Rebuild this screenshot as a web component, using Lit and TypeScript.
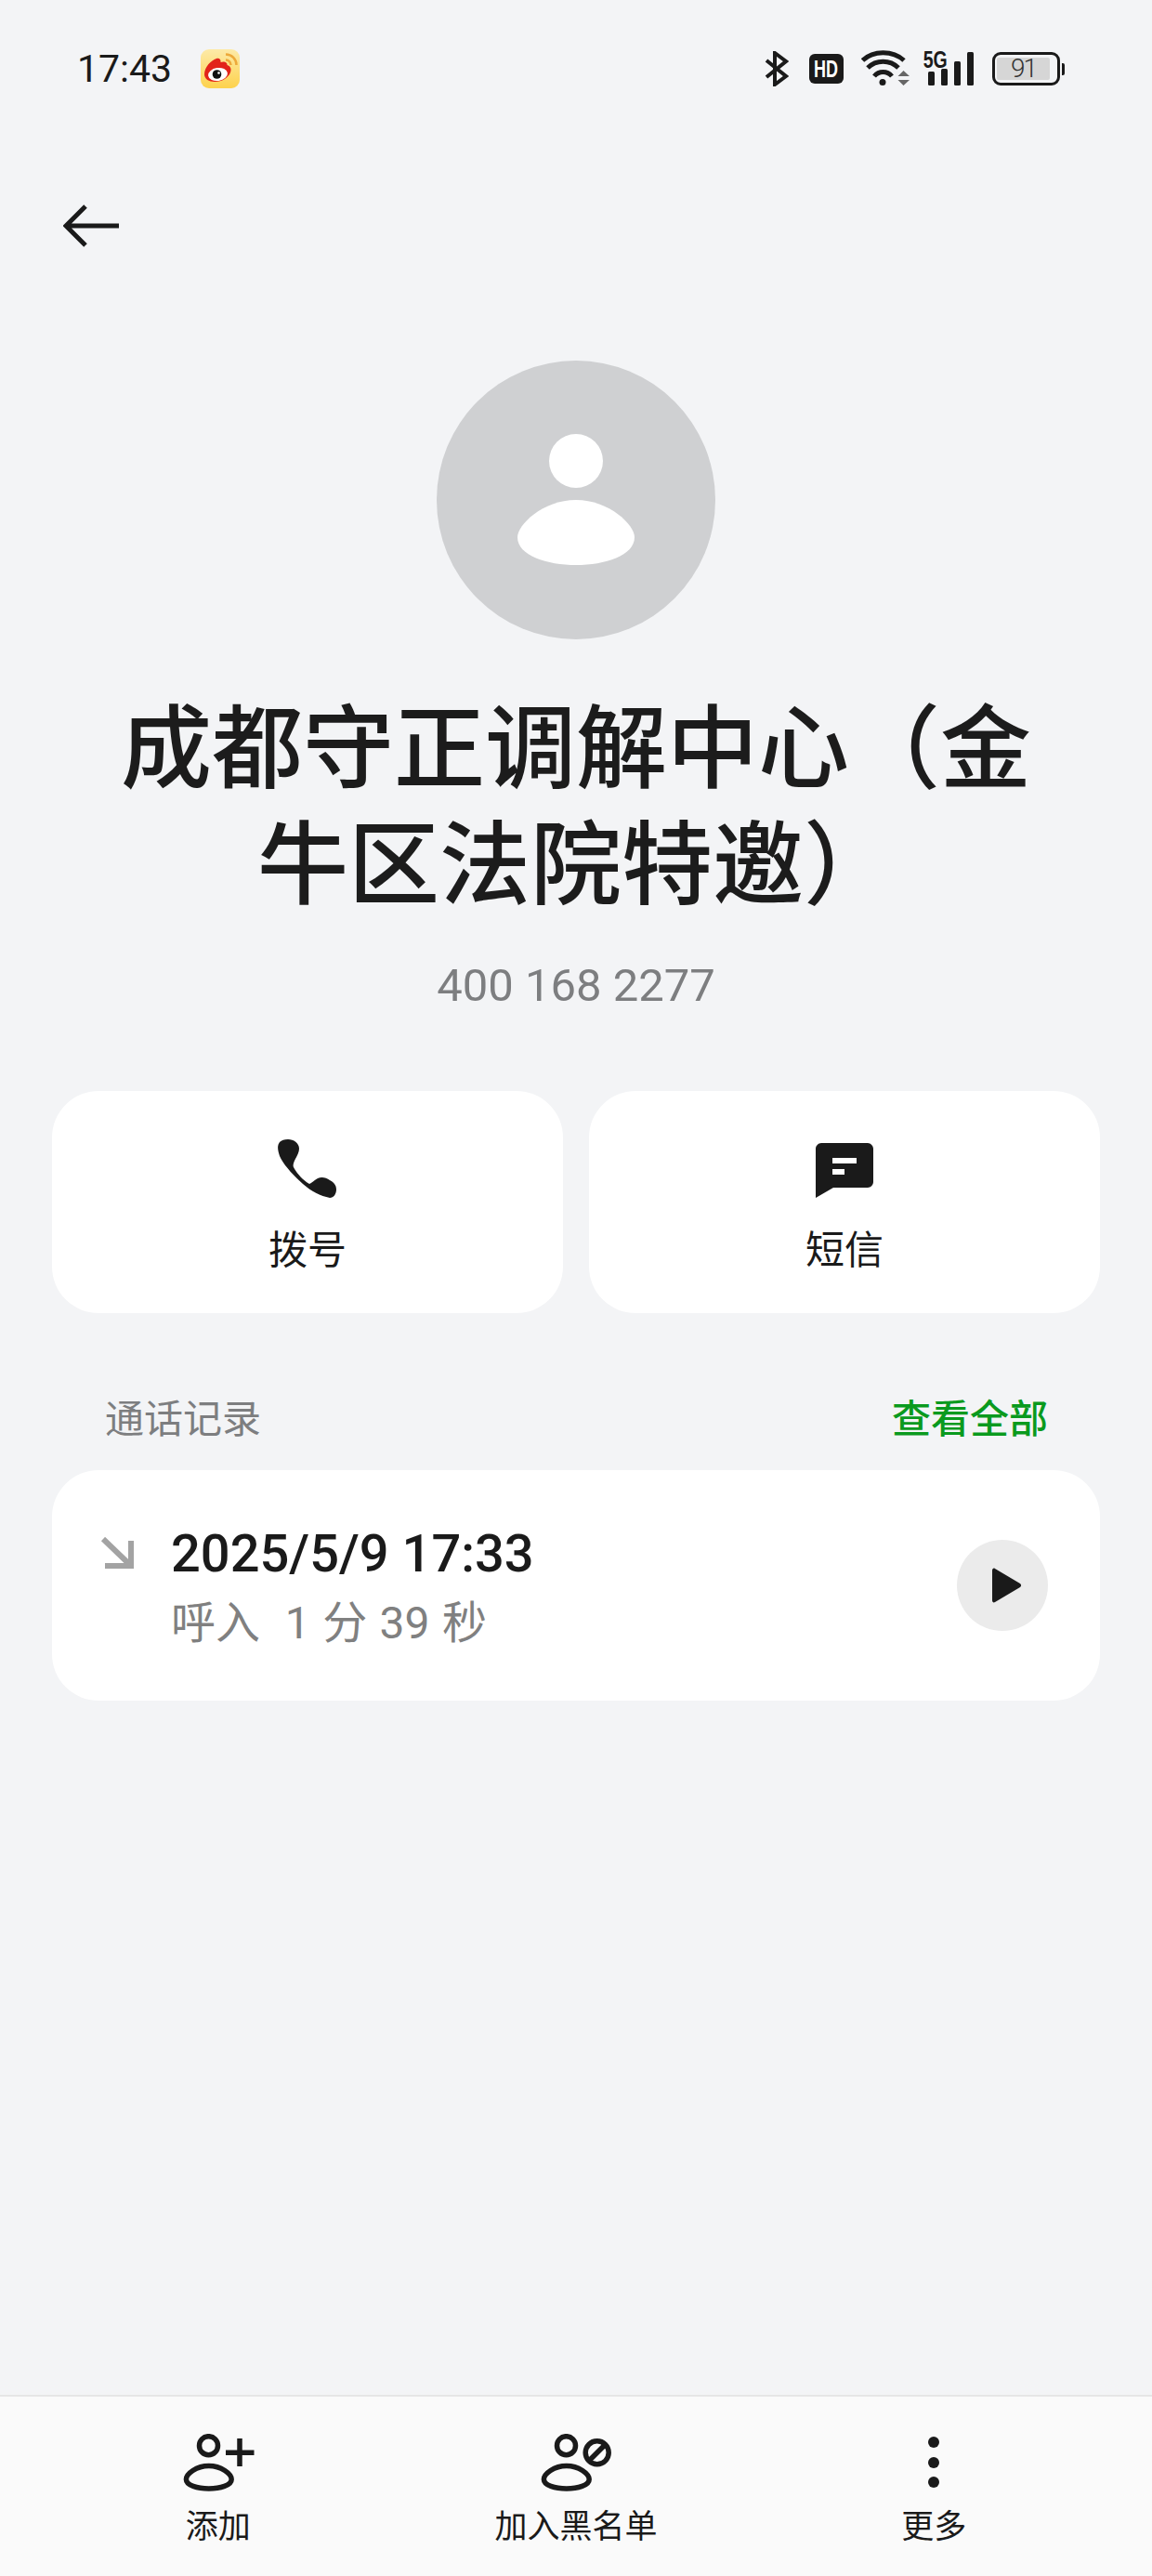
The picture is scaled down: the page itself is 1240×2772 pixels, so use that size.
import { html, css, LitElement } from "lit";
import { customElement } from "lit/decorators.js";

@customElement("app-root")
export class AppRoot extends LitElement {
  static styles = css`
    :host {
      display: flex;
      flex-direction: column;
      height: 2772px;
      background: #f3f4f6;
      color: #1a1a1a;
      font-family: Roboto, "Noto Sans CJK SC", sans-serif;
    }
    svg {
      display: block;
      flex: none;
    }

    .status {
      display: flex;
      align-items: center;
      height: 42px;
      margin-top: 53px;
      padding: 0 94px 0 83px;
    }
    .time {
      font-size: 41px;
      width: 133px;
    }
    .status-right {
      margin-left: auto;
      display: flex;
      align-items: center;
    }
    .hd-badge {
      width: 37px;
      height: 32px;
      margin-left: 22px;
      border-radius: 6px;
      background: #1a1a1a;
      color: #fff;
      font: 700 25px/32px "Liberation Sans", sans-serif;
      text-align: center;
    }
    .hd-badge span {
      display: inline-block;
      transform: scaleX(0.72);
    }
    .wifi {
      margin-left: 19px;
    }
    .signal {
      position: relative;
      margin-left: 20px;
    }
    .five-g {
      position: absolute;
      left: -9px;
      top: -4px;
      font: 700 25px/24px "Liberation Sans", sans-serif;
      transform: scaleX(0.78);
    }
    .battery {
      display: flex;
      align-items: center;
      margin-left: 20px;
    }
    .battery-body {
      width: 73px;
      height: 36px;
      box-sizing: border-box;
      border: 3px solid #1a1a1a;
      border-radius: 9px;
      padding: 3px 2px;
    }
    .battery-fill {
      width: 57px;
      height: 24px;
      background: #d6d6d6;
      border-radius: 2px;
      font-size: 28px;
      font-weight: 300;
      letter-spacing: -2px;
      line-height: 24px;
      text-align: center;
      color: #333;
    }
    .battery-tip {
      width: 3px;
      height: 13px;
      margin-left: 2px;
      background: #1a1a1a;
      border-radius: 0 2px 2px 0;
    }

    .back {
      margin: 125px 0 0 68px;
    }
    .avatar {
      width: 300px;
      height: 300px;
      margin: 122px auto 0;
      border-radius: 50%;
      background: #cfd0d2;
      display: flex;
      align-items: center;
      justify-content: center;
    }
    .name {
      margin: 56px 110px 0;
      font-size: 98px;
      line-height: 125px;
      font-weight: 500;
      text-align: center;
      color: #1c1c1c;
    }
    .number {
      margin-top: 37px;
      font-size: 49px;
      line-height: 60px;
      text-align: center;
      color: #7d7e80;
    }

    .actions {
      display: grid;
      grid-template-columns: 1fr 1fr;
      gap: 28px;
      margin: 83px 56px 0;
    }
    .action {
      height: 239px;
      background: #fff;
      border-radius: 50px;
      display: flex;
      flex-direction: column;
      align-items: center;
      padding-top: 52px;
      box-sizing: border-box;
      font-size: 42px;
    }
    .action-icon {
      height: 64px;
    }
    .action-label {
      margin-top: 28px;
      line-height: 56px;
    }

    .section {
      display: flex;
      justify-content: space-between;
      margin: 86px 56px 0;
      padding: 0 56px 0 57px;
      font-size: 42px;
      line-height: 58px;
      color: #7d7e80;
    }
    .see-all {
      color: #0a9a1e;
      font-weight: 500;
    }

    .log {
      display: flex;
      align-items: center;
      height: 248px;
      box-sizing: border-box;
      margin: 25px 56px 0;
      padding: 0 56px 0 52px;
      background: #fff;
      border-radius: 50px;
    }
    .log-arrow {
      align-self: flex-start;
      margin-top: 72px;
    }
    .log-text {
      flex: 1;
      margin-left: 40px;
      padding-top: 7px;
    }
    .log-date {
      font-size: 56px;
      line-height: 66px;
      font-weight: 500;
    }
    .log-sub {
      margin-top: 9px;
      font-size: 48px;
      line-height: 66px;
      color: #808080;
      word-spacing: 1.500px;
    }
    .play {
      width: 98px;
      height: 98px;
      border-radius: 50%;
      background: #ebebeb;
      display: flex;
      align-items: center;
      justify-content: center;
    }
    .play svg {
      margin-left: 9px;
    }

    .spacer {
      flex: 1;
    }

    .bottom {
      display: grid;
      grid-template-columns: repeat(3, 1fr);
      height: 195px;
      box-sizing: border-box;
      padding: 40px 42px 0;
      background: #fafafa;
      border-top: 2px solid #e6e6e6;
    }
    .tab {
      display: flex;
      flex-direction: column;
      align-items: center;
      font-size: 35px;
    }
    .tab-label {
      margin-top: 12px;
      line-height: 50px;
    }
  `;

  render() {
    return html`
      <div class="status">
        <div class="time">17:43</div>
        ${this.weiboIcon()}
        <div class="status-right">
          <svg width="26" height="38" viewBox="0 0 26 38" fill="none" stroke="#1a1a1a" stroke-width="4">
            <path d="M2 10 L23 27 L11 36 V2 L23 11 L2 28" />
          </svg>
          <div class="hd-badge"><span>HD</span></div>
          <svg class="wifi" width="52" height="40" viewBox="0 0 52 40" fill="none" stroke="#1a1a1a" stroke-width="5">
            <path d="M1.500 11 C13 0 34 0 46 11" />
            <path d="M7 19 C16 10 31 10 40 19" />
            <path d="M14 28 C19 22 28 22 33 28" />
            <circle cx="23" cy="34.500" r="3.500" fill="#1a1a1a" stroke="none" />
            <path d="M39.500 28 L45.500 22 L52 28 Z M39.500 32 H52 L45.500 38 Z" fill="#666" stroke="none" />
          </svg>
          <div class="signal">
            <svg width="49" height="36" viewBox="0 0 49 36" fill="#1a1a1a">
              <rect x="0" y="21" width="7" height="15" rx="1.500" />
              <rect x="14" y="18" width="7" height="18" rx="1.500" />
              <rect x="28" y="10" width="7" height="26" rx="1.500" />
              <rect x="42" y="0" width="7" height="36" rx="1.500" />
            </svg>
            <span class="five-g">5G</span>
          </div>
          <div class="battery">
            <div class="battery-body"><div class="battery-fill">91</div></div>
            <div class="battery-tip"></div>
          </div>
        </div>
      </div>

      <svg class="back" width="62" height="46" viewBox="0 0 62 46" fill="none" stroke="#1a1a1a" stroke-width="5">
        <path d="M60 23 H3 M24 2 L3 23 L24 44" />
      </svg>

      <div class="avatar">
        <svg width="128" height="142" viewBox="0 0 128 142" fill="#fff">
          <circle cx="64" cy="29" r="29" />
          <path d="M64 71 C100 71 127 98 127 111 C127 131 95 141 64 141 C33 141 1 131 1 111 C1 98 28 71 64 71 Z" />
        </svg>
      </div>

      <div class="name">成都守正调解中心（金牛区法院特邀）</div>
      <div class="number">400 168 2277</div>

      <div class="actions">
        <div class="action">
          <svg class="action-icon" width="64" height="64" viewBox="0 0 64 64" fill="#1a1a1a">
            <path d="M11 0 C17 0 23 4 23 10 C23 14 21 17 19 21 C17 25 16 28 17 30 C20 36 27 44 34 48 C37 47 39 44 43 42 C47 40 52 41 56 44 C60 46 63 49 63 54 C63 59 60 63 56 63 C46 61 36 56 27 48 C15 37 6 27 2 18 C0 12 -1 7 2 3 C4 1 7 0 11 0 Z" />
          </svg>
          <div class="action-label">拨号</div>
        </div>
        <div class="action">
          <svg class="action-icon" width="62" height="64" viewBox="0 0 62 64" fill="#1a1a1a">
            <path d="M6 4 H56 C59 4 62 7 62 10 V46 C62 49 59 52 56 52 H19 L0 63 V10 C0 7 3 4 6 4 Z" />
            <rect x="18" y="20" width="26" height="6" fill="#fff" />
            <rect x="18" y="32" width="13" height="6" fill="#fff" />
          </svg>
          <div class="action-label">短信</div>
        </div>
      </div>

      <div class="section">
        <span>通话记录</span>
        <span class="see-all">查看全部</span>
      </div>

      <div class="log">
        <svg class="log-arrow" width="36" height="34" viewBox="0 0 36 34" fill="none" stroke="#a3a3a3" stroke-width="6">
          <path d="M3 2 L31 29 M33 4 V31 H5" />
        </svg>
        <div class="log-text">
          <div class="log-date">2025/5/9 17:33</div>
          <div class="log-sub">呼入 &nbsp;1 分 39 秒</div>
        </div>
        <div class="play">
          <svg width="32" height="38" viewBox="0 0 32 38" fill="#1a1a1a">
            <path d="M3 1 L30 17 C31.500 18 31.500 20 30 21 L3 37 C1.500 38 0 37 0 35 V3 C0 1 1.500 0 3 1 Z" />
          </svg>
        </div>
      </div>

      <div class="spacer"></div>

      <div class="bottom">
        <div class="tab">
          <svg width="78" height="64" viewBox="0 0 78 64" fill="none" stroke="#1a1a1a" stroke-width="5.500">
            <circle cx="28.500" cy="12.700" r="10" />
            <path d="M28.800 34.500 C42 34.500 53.200 43 53.200 49 C53.200 55.500 41 59 28.800 59 C16.500 59 4.400 55.500 4.400 49 C4.400 43 15.500 34.500 28.800 34.500 Z" />
            <path d="M47 20.300 H77.500 M62 5 V35" />
          </svg>
          <div class="tab-label">添加</div>
        </div>
        <div class="tab">
          <svg width="78" height="64" viewBox="0 0 78 64" fill="none" stroke="#1a1a1a" stroke-width="5.500">
            <circle cx="28.500" cy="12.700" r="10" />
            <path d="M28.800 34.500 C42 34.500 53.200 43 53.200 49 C53.200 55.500 41 59 28.800 59 C16.500 59 4.400 55.500 4.400 49 C4.400 43 15.500 34.500 28.800 34.500 Z" />
            <circle cx="61.700" cy="20.300" r="12.500" />
            <path d="M53.500 28.500 L70 12" />
          </svg>
          <div class="tab-label">加入黑名单</div>
        </div>
        <div class="tab">
          <svg width="78" height="64" viewBox="0 0 78 64" fill="#1a1a1a">
            <circle cx="39" cy="9" r="6" />
            <circle cx="39" cy="31" r="6" />
            <circle cx="39" cy="52" r="6" />
          </svg>
          <div class="tab-label">更多</div>
        </div>
      </div>
    `;
  }

  weiboIcon() {
    return html`
      <svg width="42" height="42" viewBox="0 0 42 42">
        <defs>
          <linearGradient id="wb" x1="0" y1="0" x2="0" y2="1">
            <stop offset="0" stop-color="#fdeaa8" />
            <stop offset="1" stop-color="#fdd24d" />
          </linearGradient>
        </defs>
        <rect width="42" height="42" rx="9" fill="url(#wb)" />
        <path d="M27 5.500 C33.500 5.500 38.500 10.500 38.500 17 M27 11.500 C30 11.500 32.500 14 32.500 17" fill="none" stroke="#eda93a" stroke-width="2.500" />
        <path d="M4 27 C4 19 11 12 17 10 C20 9 22 11 21.500 14 C25 12.500 29 14 28.500 17 C32 18 33.500 21 32 25 C29.500 31 23 35 15 35 C9 35 4 32 4 27 Z" fill="#e2231a" />
        <ellipse cx="18.500" cy="27" rx="10.500" ry="7" fill="#fff" transform="rotate(-8 18.500 27)" />
        <circle cx="17.500" cy="27" r="4.800" fill="#111" />
        <circle cx="19.500" cy="25.500" r="1.300" fill="#fff" />
      </svg>
    `;
  }
}
